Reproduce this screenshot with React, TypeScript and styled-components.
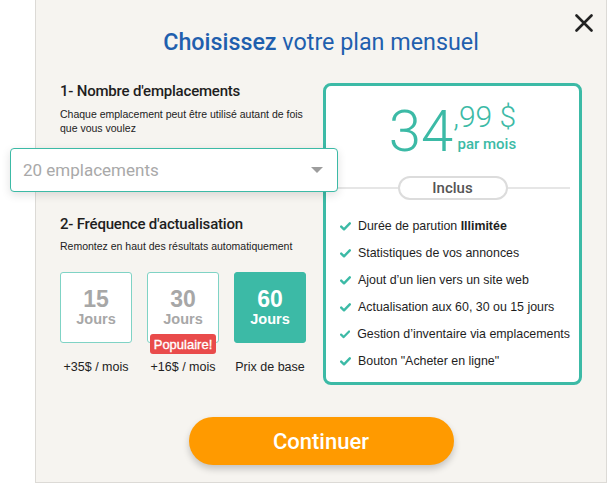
import React from "react";
import styled, { createGlobalStyle } from "styled-components";

const TEAL = "#3cbaa6";
const ROUND = `"Roboto", "Lato", "Liberation Sans", sans-serif`;

const GlobalStyle = createGlobalStyle`
  body {
    margin: 0;
    background: #ffffff;
    font-family: "Liberation Sans", Arial, sans-serif;
  }
`;

const features = [
  { text: "Durée de parution ", strong: "Illimitée" },
  { text: "Statistiques de vos annonces" },
  { text: "Ajout d’un lien vers un site web" },
  { text: "Actualisation aux 60, 30 ou 15 jours" },
  { text: "Gestion d’inventaire via emplacements" },
  { text: 'Bouton "Acheter en ligne"' },
];

const frequencies = [
  { days: "15", price: "+35$ / mois" },
  { days: "30", price: "+16$ / mois", badge: "Populaire!" },
  { days: "60", price: "Prix de base", active: true },
];

const CheckIcon = () => (
  <svg width="11" height="9" viewBox="0 0 11 9">
    <path d="M1.2 4.6 L4 7.3 L9.8 1.3" fill="none" stroke={TEAL} strokeWidth="2.4" strokeLinecap="round" strokeLinejoin="round" />
  </svg>
);

const App = () => (
  <>
    <GlobalStyle />
    <Page>
      <Modal>
        <Close aria-label="fermer">
          <svg width="18" height="18" viewBox="0 0 18 18">
            <path d="M1.5 1.5 L16.5 16.5 M16.5 1.5 L1.5 16.5" stroke="#222" strokeWidth="2.6" strokeLinecap="round" />
          </svg>
        </Close>
        <Title>
          <b>Choisissez</b> votre plan mensuel
        </Title>
        <Body>
          <Left>
            <Heading>1- Nombre d'emplacements</Heading>
            <Desc>
              Chaque emplacement peut être utilisé autant de fois
              <br />
              que vous voulez
            </Desc>
            <Select>
              <span>20 emplacements</span>
              <Caret />
            </Select>
            <Heading $top={24}>2- Fréquence d'actualisation</Heading>
            <Desc $top={7}>Remontez en haut des résultats automatiquement</Desc>
            <Options>
              {frequencies.map((f) => (
                <Option key={f.days}>
                  <DayBox $active={f.active}>
                    <Days>{f.days}</Days>
                    <Jours>Jours</Jours>
                    {f.badge && <Badge>{f.badge}</Badge>}
                  </DayBox>
                  <OptionPrice>{f.price}</OptionPrice>
                </Option>
              ))}
            </Options>
          </Left>
          <Card>
            <PriceRow>
              <Dollars>34</Dollars>
              <PriceSide>
                <Cents>,99 $</Cents>
                <PerMonth>par mois</PerMonth>
              </PriceSide>
            </PriceRow>
            <Divider>
              <Pill>Inclus</Pill>
            </Divider>
            <Features>
              {features.map((f) => (
                <Feature key={f.text}>
                  <CheckIcon />
                  <span>
                    {f.text}
                    {f.strong && <strong>{f.strong}</strong>}
                  </span>
                </Feature>
              ))}
            </Features>
          </Card>
        </Body>
        <Footer>
          <Continue>Continuer</Continue>
        </Footer>
      </Modal>
    </Page>
  </>
);

export default App;

const Page = styled.div`
  width: 609px;
  height: 485px;
  padding-left: 35px;
  box-sizing: border-box;
  overflow: hidden;
`;

const Modal = styled.div`
  position: relative;
  width: 572px;
  height: 483px;
  box-sizing: border-box;
  background: #f6f4f0;
  border: 1px solid #dcdad6;
  border-top: none;
  padding: 27px 24px 0 24px;
  display: flex;
  flex-direction: column;
`;

const Close = styled.button`
  position: absolute;
  top: 13px;
  right: 12px;
  width: 20px;
  height: 20px;
  padding: 1px;
  border: none;
  background: none;
  cursor: pointer;
`;

const Title = styled.h1`
  margin: 0;
  text-align: center;
  font-family: ${ROUND};
  font-size: 23.3px;
  line-height: 30px;
  font-weight: 400;
  color: #1f5fae;
  b {
    font-weight: 500;
  }
`;

const Body = styled.div`
  display: flex;
  gap: 18px;
  margin-top: 26px;
`;

const Left = styled.div`
  width: 245px;
  display: flex;
  flex-direction: column;
`;

const Heading = styled.h2<{ $top?: number }>`
  margin: ${(p) => p.$top ?? 0}px 0 0;
  font-family: ${ROUND};
  font-size: 15px;
  line-height: 16px;
  font-weight: 500;
  letter-spacing: -0.2px;
  color: #1e1e1e;
`;

const Desc = styled.p<{ $top?: number }>`
  margin: ${(p) => p.$top ?? 8}px 0 0;
  font-size: 10.5px;
  line-height: 14px;
  color: #222;
  white-space: nowrap;
`;

const Select = styled.div`
  position: relative;
  z-index: 2;
  margin: 13px 0 0 -50px;
  width: 328px;
  height: 44px;
  box-sizing: border-box;
  display: flex;
  align-items: center;
  justify-content: space-between;
  padding: 0 14px 0 12px;
  background: #fff;
  border: 1px solid ${TEAL};
  border-radius: 4px;
  box-shadow: 0 3px 10px rgba(0, 0, 0, 0.12);
  font-family: ${ROUND};
  font-size: 17px;
  color: #a9a9a9;
`;

const Caret = styled.span`
  width: 0;
  height: 0;
  border-left: 6px solid transparent;
  border-right: 6px solid transparent;
  border-top: 6px solid #9d9d9d;
`;

const Options = styled.div`
  display: flex;
  gap: 15px;
  margin-top: 19px;
`;

const Option = styled.div`
  width: 72px;
  display: flex;
  flex-direction: column;
  align-items: center;
`;

const DayBox = styled.div<{ $active?: boolean }>`
  position: relative;
  width: 72px;
  height: 71px;
  box-sizing: border-box;
  display: flex;
  flex-direction: column;
  align-items: center;
  justify-content: center;
  border-radius: 3px;
  border: 1.5px solid ${(p) => (p.$active ? TEAL : "#7fd3c5")};
  background: ${(p) => (p.$active ? TEAL : "#fff")};
  color: ${(p) => (p.$active ? "#fff" : "#a7a7a7")};
  font-weight: 700;
`;

const Days = styled.span`
  font-size: 23px;
  line-height: 24px;
`;

const Jours = styled.span`
  font-size: 14.5px;
  line-height: 17px;
`;

const Badge = styled.span`
  position: absolute;
  bottom: -12px;
  left: 50%;
  transform: translateX(-50%);
  width: 66px;
  height: 20px;
  display: flex;
  align-items: center;
  justify-content: center;
  background: #e94b4b;
  border-radius: 3px;
  color: #fff;
  font-size: 13px;
  font-weight: 400;
  -webkit-text-stroke: 0.35px #fff;
  white-space: nowrap;
`;

const OptionPrice = styled.span`
  margin-top: 17px;
  font-size: 12.5px;
  line-height: 14px;
  color: #222;
  white-space: nowrap;
`;

const Card = styled.div`
  width: 259px;
  height: 302px;
  box-sizing: border-box;
  background: #fff;
  border: 3px solid ${TEAL};
  border-radius: 8px;
  padding: 14px 9px 0;
  display: flex;
  flex-direction: column;
`;

const PriceRow = styled.div`
  display: flex;
  justify-content: center;
  align-items: flex-start;
  color: ${TEAL};
  font-family: ${ROUND};
`;

const Dollars = styled.span`
  font-size: 58px;
  line-height: 62px;
  font-weight: 300;
`;

const PriceSide = styled.div`
  display: flex;
  flex-direction: column;
  align-items: flex-end;
  padding-top: 2px;
`;

const Cents = styled.span`
  font-size: 30px;
  line-height: 30px;
  font-weight: 300;
`;

const PerMonth = styled.span`
  margin-top: 5px;
  font-size: 15px;
  line-height: 15px;
  font-weight: 500;
`;

const Divider = styled.div`
  display: flex;
  align-items: center;
  justify-content: center;
  margin-top: 14px;
  height: 24px;
  background: linear-gradient(#e6e6e6, #e6e6e6) center / 100% 2px no-repeat;
`;

const Pill = styled.span`
  width: 110px;
  height: 24px;
  box-sizing: border-box;
  display: flex;
  align-items: center;
  justify-content: center;
  background: #fff;
  border: 2px solid #dcdcdc;
  border-radius: 12px;
  font-family: ${ROUND};
  font-size: 15px;
  font-weight: 500;
  color: #555;
`;

const Features = styled.ul`
  list-style: none;
  margin: 19px 0 0;
  padding: 0 0 0 5px;
  display: flex;
  flex-direction: column;
  gap: 13px;
`;

const Feature = styled.li`
  display: flex;
  align-items: center;
  gap: 7px;
  font-size: 12.4px;
  line-height: 14px;
  color: #1e1e1e;
  white-space: nowrap;
  strong {
    font-weight: 700;
  }
`;

const Footer = styled.div`
  display: flex;
  justify-content: center;
  margin-top: 32px;
`;

const Continue = styled.button`
  width: 265px;
  height: 48px;
  border: none;
  border-radius: 24px;
  background: #ff9a00;
  box-shadow: 0 4px 7px rgba(0, 0, 0, 0.2);
  color: #fff;
  font-family: ${ROUND};
  font-size: 22px;
  font-weight: 500;
  cursor: pointer;
`;
